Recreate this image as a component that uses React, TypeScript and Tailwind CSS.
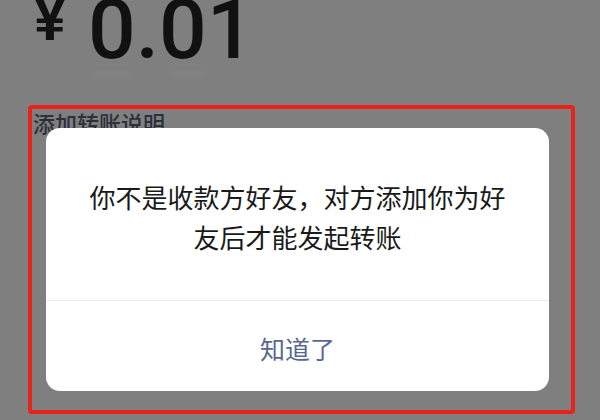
import React from "react";

export default function App() {
  return (
    <div className="relative w-[600px] h-[420px] overflow-hidden bg-[#7f7f7f]" style={{ fontFamily: '"Noto Sans CJK SC", "Noto Sans", sans-serif' }}>
      {/* amount row */}
      <div className="flex items-start -mt-[12px] pl-[34px] h-[84px]">
        <span className="mt-[2px] text-[60px] leading-[60px] font-semibold text-[#111]" style={{ fontFamily: 'Roboto, "Noto Sans", sans-serif' }}>¥</span>
        <span className="ml-[22px] text-[84px] leading-[84px] font-medium tracking-[0px] text-[#111]" style={{ fontFamily: 'Roboto, "Noto Sans", sans-serif' }}>0.01</span>
      </div>
      <div className="flex gap-[40px] pl-[93px] mt-[-1px] h-[8px]">
        <div className="w-[37px] h-[8px] bg-[#818181]" />
        <div className="w-[37px] h-[8px] bg-[#818181]" />
      </div>
      <div className="mt-[32px] pl-[33px] text-[22px] leading-[22px] font-medium text-[#2b303b]">添加转账说明</div>

      {/* red highlight */}
      <div className="absolute left-[28px] top-[105px] w-[547px] h-[309px] border-[4px] border-[#e8231c] rounded-[4px]" />

      {/* dialog */}
      <div className="absolute left-[46px] top-[128px] w-[503px] h-[263px] bg-white rounded-[14px] flex flex-col">
        <div className="h-[172px] flex items-center justify-center px-[30px]">
          <p className="text-center text-[26px] leading-[40px] text-[#1a1a1a] pt-[6px]">
            你不是收款方好友，对方添加你为好
            <br />
            友后才能发起转账
          </p>
        </div>
        <div className="h-px bg-[#ededed]" />
        <div className="flex-1 flex items-center justify-center">
          <span className="text-[25px] leading-[30px] text-[#5a6890] pt-[4px]">知道了</span>
        </div>
      </div>
    </div>
  );
}
